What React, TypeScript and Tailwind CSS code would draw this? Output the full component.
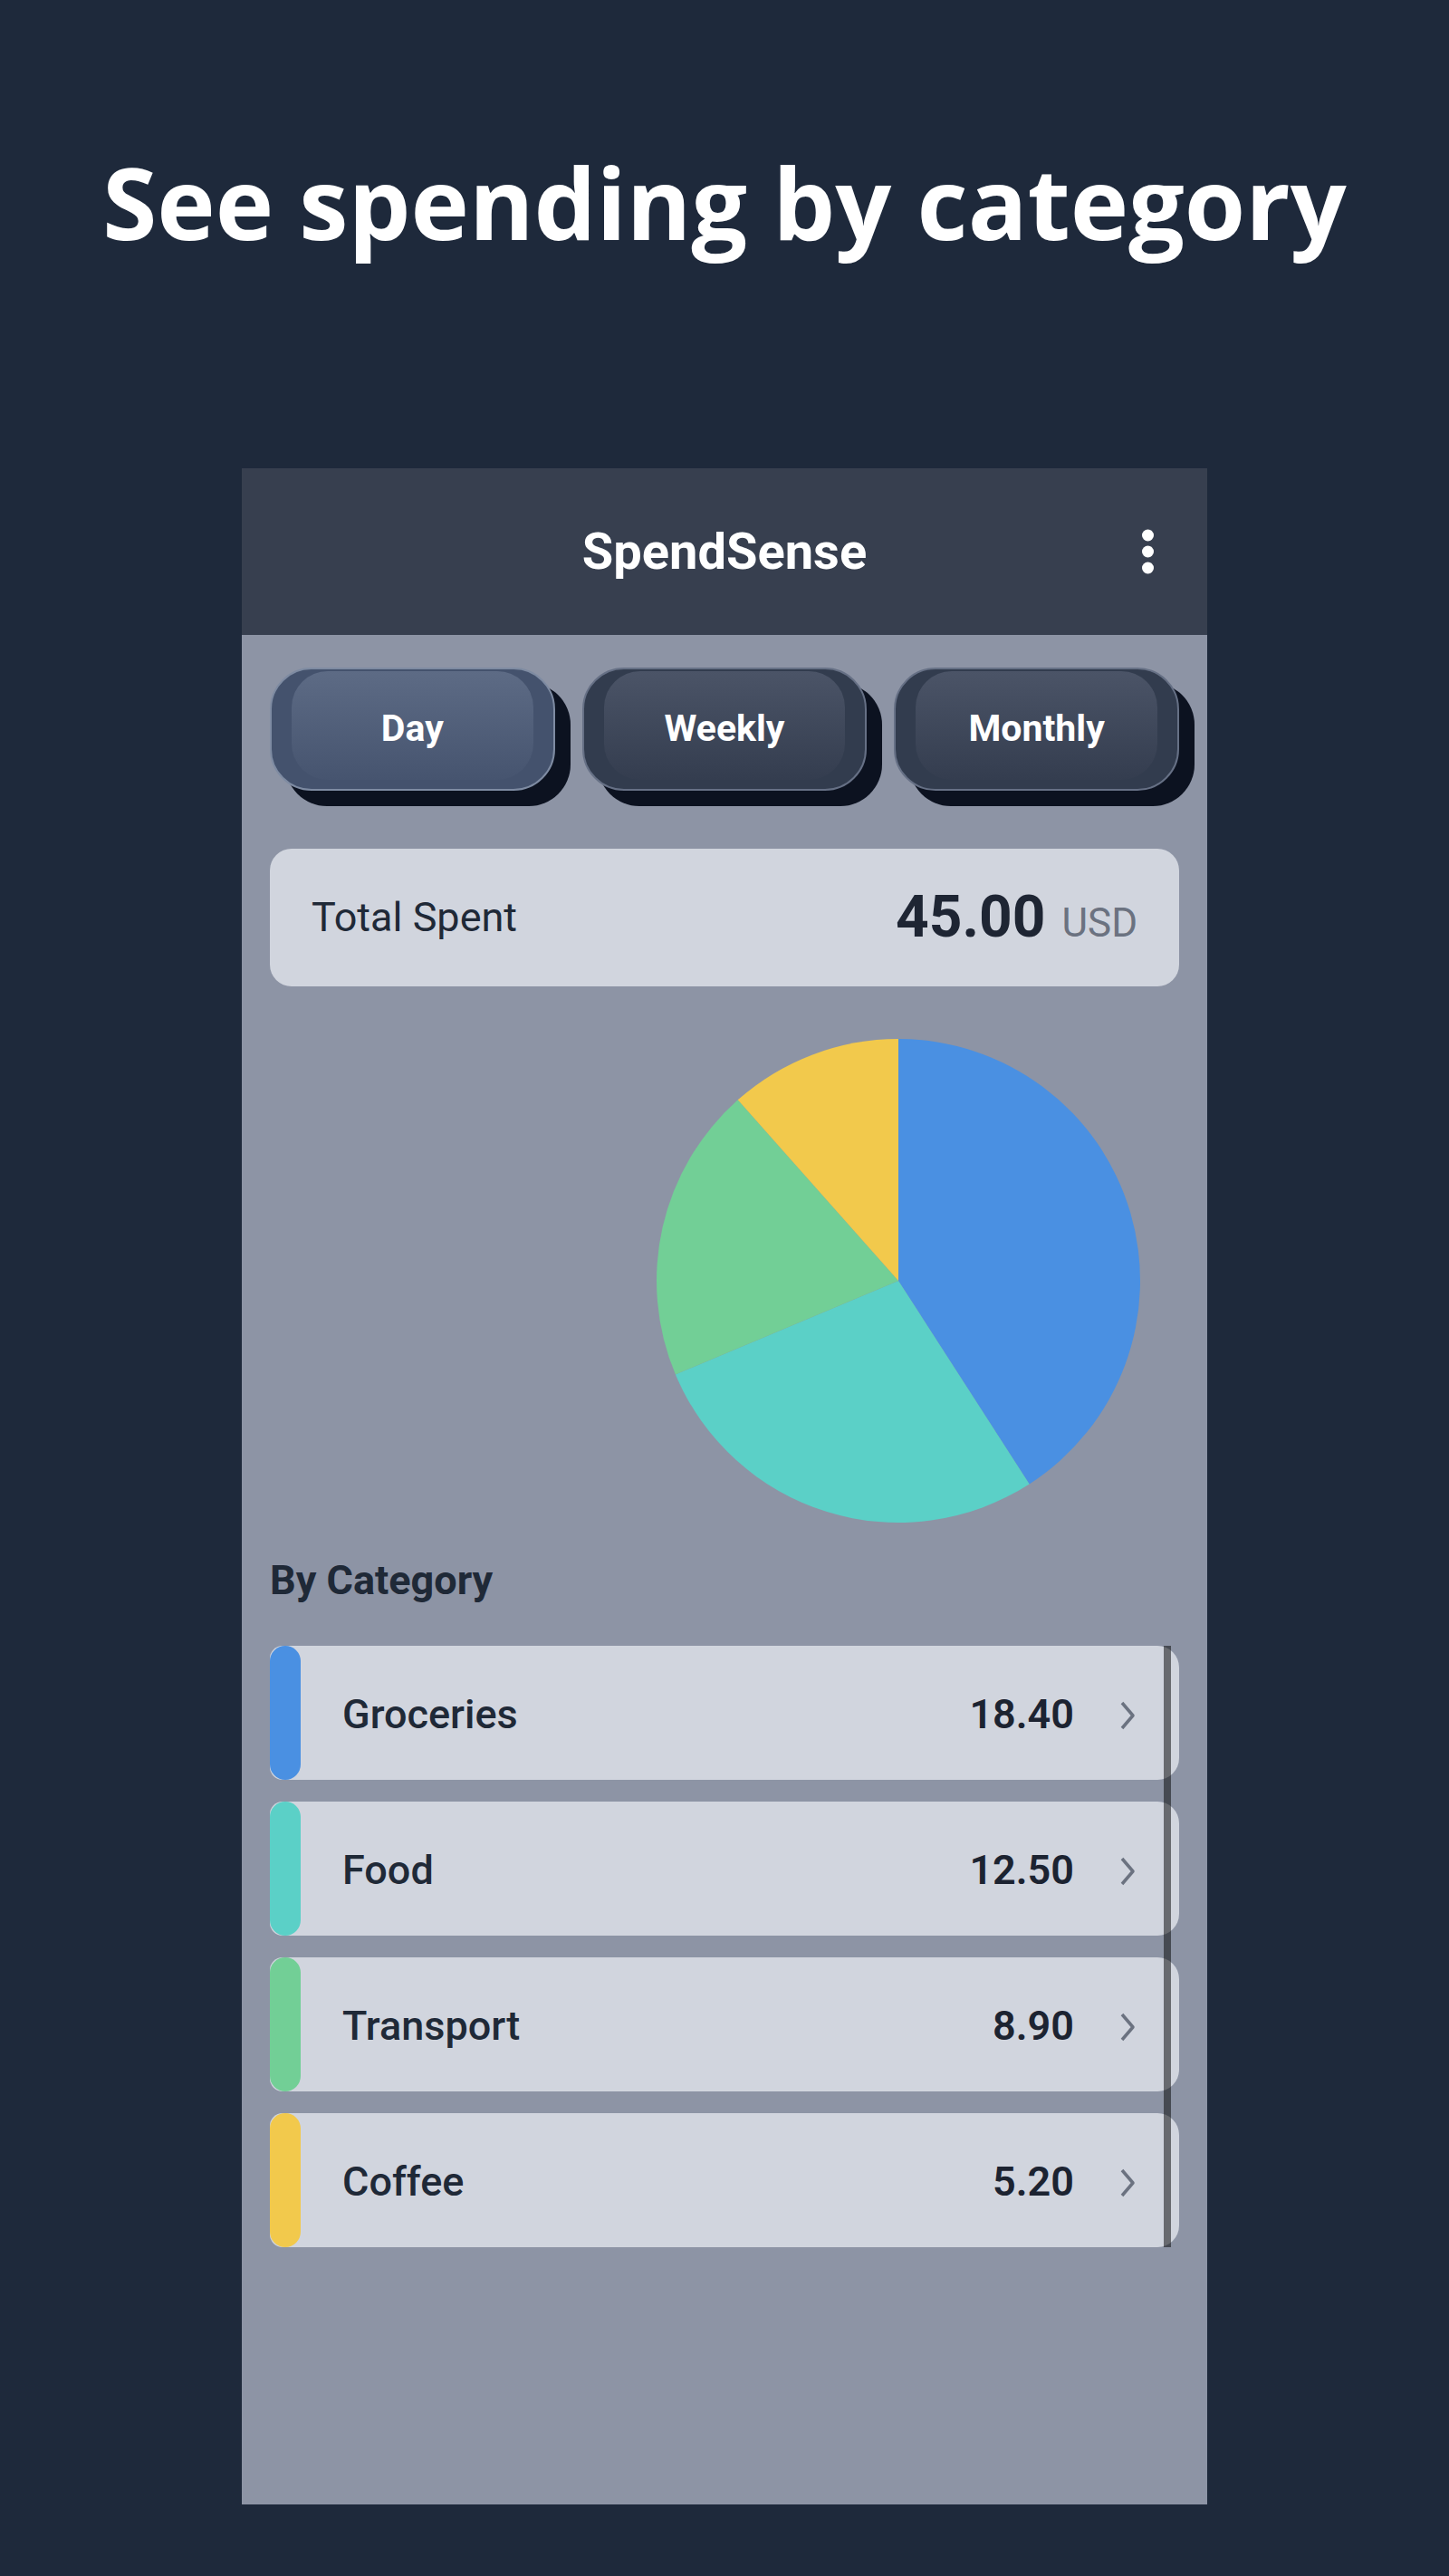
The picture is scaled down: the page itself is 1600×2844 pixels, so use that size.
import React from "react";

const CATEGORIES = [
  { name: "Groceries", amount: 18.4, bar: "bg-[#4a90e2]", fill: "#4a90e2" },
  { name: "Food", amount: 12.5, bar: "bg-[#5bd0c7]", fill: "#5bd0c7" },
  { name: "Transport", amount: 8.9, bar: "bg-[#72cf96]", fill: "#72cf96" },
  { name: "Coffee", amount: 5.2, bar: "bg-[#f2c94c]", fill: "#f2c94c" },
];

const PERIODS = ["Day", "Weekly", "Monthly"];

function slicePath(cx: number, cy: number, r: number, a0: number, a1: number) {
  const rad = (a: number) => (a * Math.PI) / 180;
  const x0 = cx + r * Math.sin(rad(a0));
  const y0 = cy - r * Math.cos(rad(a0));
  const x1 = cx + r * Math.sin(rad(a1));
  const y1 = cy - r * Math.cos(rad(a1));
  const large = a1 - a0 > 180 ? 1 : 0;
  return `M ${cx} ${cy} L ${x0} ${y0} A ${r} ${r} 0 ${large} 1 ${x1} ${y1} Z`;
}

function PieChart() {
  const total = CATEGORIES.reduce((s, c) => s + c.amount, 0);
  let angle = 0;
  return (
    <svg width="536" height="536" viewBox="0 0 536 536">
      {CATEGORIES.map((c) => {
        const start = angle;
        angle += (c.amount / total) * 360;
        return <path key={c.name} d={slicePath(268, 268, 267, start, angle)} fill={c.fill} />;
      })}
    </svg>
  );
}

function PeriodButton({ label, active }: { label: string; active: boolean }) {
  return (
    <div className="relative h-[136px]">
      <div className="absolute left-[17px] top-[17px] right-[-17px] bottom-[-17px] rounded-[46px] bg-[#0c1220]" />
      <div
        className={`relative h-full overflow-hidden rounded-[46px] border-2 ${
          active ? "border-[#7e8ba2] bg-[#44526d]" : "border-[#667085] bg-[#323c4e]"
        }`}
      >
        <div
          className={`absolute left-[22px] right-[22px] top-[2px] bottom-[10px] rounded-[40px] bg-gradient-to-b ${
            active ? "from-[#5d6b85] to-[#46546f]" : "from-[#4b5467] to-[#343d4f]"
          }`}
        />
        <span className="relative flex h-full items-center justify-center text-[41px] font-bold text-white">
          {label}
        </span>
      </div>
    </div>
  );
}

function Chevron() {
  return (
    <svg width="18" height="32" viewBox="0 0 18 32" className="ml-[50px] mt-[6px] shrink-0">
      <polyline points="3,2 15,16 3,30" fill="none" stroke="#6b7280" strokeWidth="3.5" strokeLinejoin="round" />
    </svg>
  );
}

export default function App() {
  return (
    <div className="flex min-h-[2844px] flex-col items-center bg-[#1e293b] pt-[168px]">
      <h1 className="text-[109px] font-bold leading-none text-white" style={{ fontFamily: '"Open Sans", sans-serif' }}>
        See spending by category
      </h1>

      <div
        className="mt-[240px] flex h-[2248px] w-[1066px] flex-col bg-[#8d94a5]"
        style={{ fontFamily: "Roboto, sans-serif" }}
      >
        <header className="relative flex h-[184px] shrink-0 items-center justify-center bg-[#373f4f]">
          <span className="text-[56px] font-bold text-white">SpendSense</span>
          <div className="absolute right-[59px] top-1/2 flex -translate-y-1/2 flex-col gap-[5px]">
            <span className="h-[13px] w-[13px] rounded-full bg-white" />
            <span className="h-[13px] w-[13px] rounded-full bg-white" />
            <span className="h-[13px] w-[13px] rounded-full bg-white" />
          </div>
        </header>

        <div className="flex flex-col px-[31px] pt-[36px]">
          <div className="grid grid-cols-3 gap-[30px]">
            {PERIODS.map((p, i) => (
              <PeriodButton key={p} label={p} active={i === 0} />
            ))}
          </div>

          <div className="mt-[64px] flex h-[152px] items-center justify-between rounded-[24px] bg-[#d1d5de] px-[46px]">
            <span className="text-[45px] text-[#1f2937]">Total Spent</span>
            <div className="flex items-baseline gap-[18px]">
              <span className="text-[64px] font-bold text-[#1e2533]">45.00</span>
              <span className="text-[44px] text-[#6b7280]">USD</span>
            </div>
          </div>

          <div className="mt-[57px] flex justify-end pr-[42px]">
            <PieChart />
          </div>

          <h2 className="mt-[40px] text-[45px] font-bold leading-none text-[#1f2937]">By Category</h2>

          <div className="relative mt-[50px] flex flex-col gap-[24px]">
            {CATEGORIES.map((c) => (
              <div
                key={c.name}
                className="relative flex h-[148px] items-center rounded-l-[14px] rounded-r-[24px] bg-[#d1d5de] pl-[80px] pr-[48px]"
              >
                <div className={`absolute bottom-0 left-0 top-0 w-[34px] rounded-[17px] ${c.bar}`} />
                <span className="flex-1 pt-[4px] text-[45px] font-medium text-[#1f2937]">{c.name}</span>
                <span className="pt-[4px] text-[45px] font-semibold text-[#1c2331]">{c.amount.toFixed(2)}</span>
                <Chevron />
              </div>
            ))}
            <div className="absolute bottom-0 right-[9px] top-0 w-[8px] bg-black/50" />
          </div>
        </div>
      </div>
    </div>
  );
}
